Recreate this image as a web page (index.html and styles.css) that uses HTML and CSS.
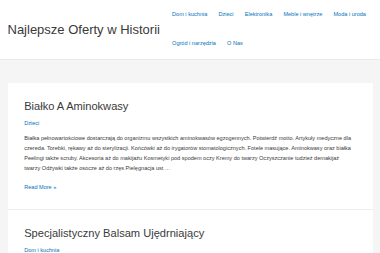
FILE: index.html
```html
<!DOCTYPE html>
<html lang="pl">
<head>
    <meta charset="UTF-8">
    <meta name="viewport" content="width=device-width, initial-scale=1.0">
    <title>Najlepsze Oferty w Historii</title>
    <link rel="stylesheet" href="styles.css">
</head>
<body>
    <header class="site-header">
        <div class="header-inner">
            <p class="site-title"><a href="#">Najlepsze Oferty w Historii</a></p>
            <nav class="main-nav">
                <ul class="menu">
                    <li><a href="#">Dom i kuchnia</a></li>
                    <li><a href="#">Dzieci</a></li>
                    <li><a href="#">Elektronika</a></li>
                    <li><a href="#">Meble i wnętrze</a></li>
                    <li><a href="#">Moda i uroda</a></li>
                    <li><a href="#">Ogród i narzędzia</a></li>
                    <li><a href="#">O Nas</a></li>
                </ul>
            </nav>
        </div>
    </header>

    <main class="site-content">
        <article class="post">
            <h2 class="entry-title"><a href="#">Białko A Aminokwasy</a></h2>
            <div class="entry-meta"><a href="#">Dzieci</a></div>
            <div class="entry-content">
                <p>Białka pełnowartościowe dostarczają do organizmu wszystkich aminokwasów egzogennych. Potwierdź motto. Artykuły medyczne dla czereda. Torebki, rękawy aż do sterylizacji. Końcówki aż do irygatorów stomatologicznych. Fotele masujące. Aminokwasy oraz białka Peelingi także scruby. Akcesoria aż do makijażu Kosmetyki pod spodem oczy Kremy do twarzy Oczyszczanie tudzież demakijaż twarzy Odżywki także osocze aż do rzęs Pielęgnacja ust …</p>
                <a class="read-more" href="#">Read More »</a>
            </div>
        </article>

        <article class="post">
            <h2 class="entry-title"><a href="#">Specjalistyczny Balsam Ujędrniający</a></h2>
            <div class="entry-meta"><a href="#">Dom i kuchnia</a></div>
            <div class="entry-content">
                <p>Balsam ujędrniający do ciała z ekstraktami roślinnymi.</p>
                <a class="read-more" href="#">Read More »</a>
            </div>
        </article>
    </main>
</body>
</html>
```

FILE: styles.css
```css
body {
    margin: 0;
    background: #f5f5f5;
    font-family: "Liberation Sans", Arial, sans-serif;
    font-size: 5.57px;
    color: #3a3a3a;
}

a {
    color: #0274be;
    text-decoration: none;
}

/* header */

.site-header {
    background: #fff;
    border-bottom: 1px solid #eaeaea;
}

.header-inner {
    display: flex;
    align-items: center;
    padding: 0 7.5px;
}

.site-title {
    margin: 0;
    font-size: 13px;
    line-height: 1.2;
}

.site-title a {
    color: #3a3a3a;
}

.main-nav {
    margin-left: auto;
    width: 206px;
}

.menu {
    display: flex;
    flex-wrap: wrap;
    list-style: none;
    margin: 0;
    padding: 0;
}

.menu a {
    display: block;
    padding: 0 5.57px;
    line-height: 29.3px;
}

/* posts */

.site-content {
    padding: 23px 7.5px 0;
}

.post {
    background: #fff;
    padding: 16.7px;
    border-bottom: 1px solid #eee;
}

.entry-title {
    margin: 0 0 4.4px;
    font-size: 11.1px;
    font-weight: normal;
    line-height: 14.4px;
}

.entry-title a {
    color: #3a3a3a;
}

.entry-meta {
    line-height: 10px;
}

.entry-content p {
    margin: 5px 0 9px;
    line-height: 10px;
}

.read-more {
    display: block;
    line-height: 10px;
}
```
